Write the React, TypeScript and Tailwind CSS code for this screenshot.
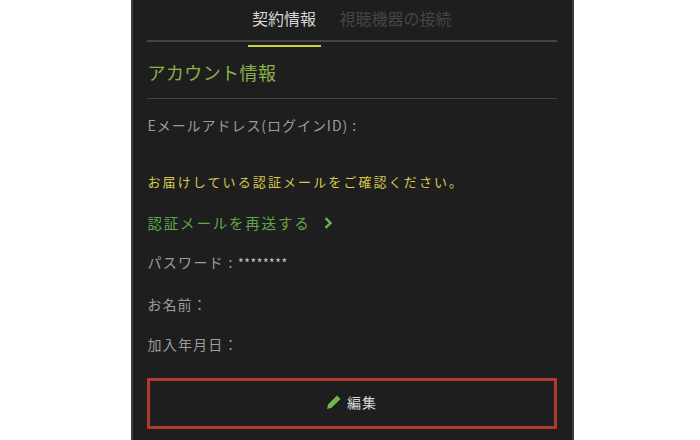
export default function App() {
  return (
    <div className="w-[700px] h-[440px] overflow-hidden bg-white flex justify-center font-['Noto_Sans_CJK_JP','Noto_Sans',sans-serif]">
      <div className="ml-[4px] w-[443px] h-[440px] shrink-0 bg-[#1e1e1e] border-x-2 border-[#3d4030] pl-[14px] pr-[15px] flex flex-col">
        <div className="h-[42px] flex justify-center border-b-2 border-[#444444] pl-[5px]">
          <div className="w-[73px] h-[40px] border-b-2 border-[#c8d040] mb-[-2px] box-content flex justify-center pt-[5px] text-[16px] leading-[26px] text-[#d6d6d6]">契約情報</div>
          <div className="w-[130px] ml-[10px] pt-[5px] text-[16px] leading-[26px] text-[#454545] text-center">視聴機器の接続</div>
        </div>
        <div className="h-[57px] border-b border-[#444444] pt-[16px] pl-[1px] text-[18px] leading-[28px] tracking-[0.4px] text-[#8cb04a]">アカウント情報</div>
        <div className="pt-[16px] pl-[1px] text-[14px] leading-[20px] tracking-[0.95px] text-[#9c9c9c]">Eメールアドレス(ログインID) :</div>
        <div className="pt-[37px] pl-[1px] text-[13px] leading-[20px] tracking-[2.1px] text-[#d8c850]">お届けしている認証メールをご確認ください。</div>
        <div className="pt-[21px] pl-[1px] flex items-center gap-[13px] text-[14.5px] leading-[20px] tracking-[1.8px] text-[#5fa648]">
          <span>認証メールを再送する</span>
          <svg width="9" height="12" viewBox="0 0 9 12" fill="none"><path d="M1.5 1.2 6.5 6 1.5 10.8" stroke="#6fb050" strokeWidth="2.4" /></svg>
        </div>
        <div className="pt-[19px] pl-[1px] text-[14px] leading-[20px] tracking-[1.3px] text-[#9c9c9c]">パスワード : <span className="text-[12px] tracking-[0.6px] text-[#c8c8c8]">********</span></div>
        <div className="pt-[21px] pl-[1px] text-[14px] leading-[20px] tracking-[1px] text-[#9c9c9c]">お名前：</div>
        <div className="pt-[20px] pl-[1px] text-[14px] leading-[20px] tracking-[1.2px] text-[#9c9c9c]">加入年月日：</div>
        <div className="mt-[24px] h-[51px] border-[3px] border-[#b03830] flex items-center justify-center gap-[5px] pb-[3px] text-[14px] tracking-[1px] text-[#d8d8d8]">
          <svg width="16" height="16" viewBox="0 0 16 16"><path d="M1 15 2.2 10.2 11 1.5l3.5 3.5-8.8 8.8z" fill="#6fb84a" /></svg>
          <span>編集</span>
        </div>
      </div>
    </div>
  );
}
